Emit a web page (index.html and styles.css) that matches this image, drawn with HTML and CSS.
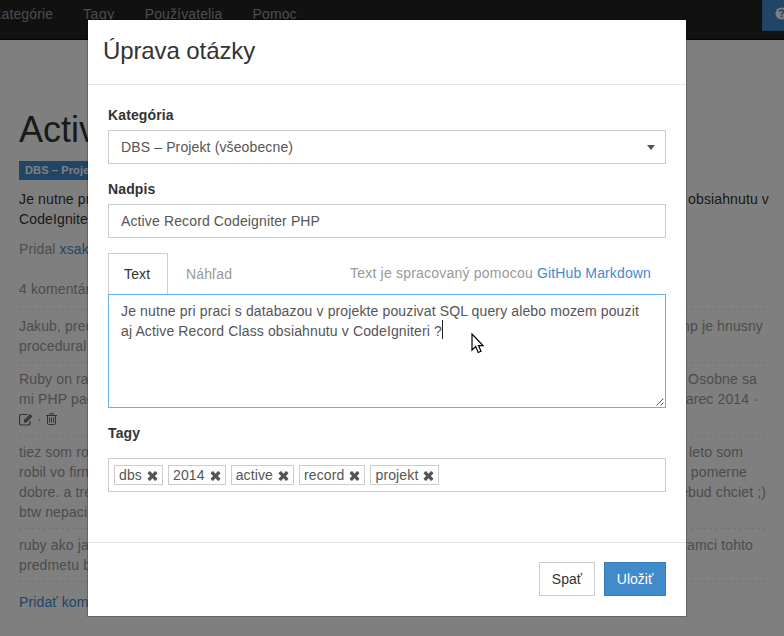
FILE: index.html
```html
<!DOCTYPE html>
<html lang="sk">
<head>
<meta charset="utf-8">
<title>Úprava otázky</title>
<link rel="stylesheet" href="styles.css">
</head>
<body>
<svg class="defs" width="0" height="0"><symbol id="times" viewBox="0 0 11 11"><path d="M3 .4 5.500 2.900 8 .4Q8.500 0 9 .4L10.600 2Q11 2.500 10.600 3L8.100 5.500 10.600 8Q11 8.500 10.600 9L9 10.600Q8.500 11 8 10.600L5.500 8.100 3 10.600Q2.500 11 2 10.600L.4 9Q0 8.500.4 8L2.900 5.500.4 3Q0 2.500.4 2L2 .4Q2.500 0 3 .4Z"/></symbol></svg>
<nav class="navbar">
  <div class="nav-links"><a>Kategórie</a><a>Tagy</a><a>Používatelia</a><a>Pomoc</a></div>
  <button class="help"><svg width="13" height="13" viewBox="0 0 13 13"><circle cx="6.500" cy="6.500" r="6" fill="#fff"/><path d="M4.300 5Q4.500 3 6.600 3 8.700 3.100 8.700 4.800C8.700 6.100 6.600 6.100 6.600 7.700" fill="none" stroke="#428bca" stroke-width="1.700"/><path d="M5.700 8.600h1.800v1.700H5.700z" fill="#428bca"/></svg></button>
</nav>
<main class="page">
  <h1>Activ</h1>
  <div class="label-row"><span class="label">DBS – Proje</span></div>
  <div class="question">
    <div class="line"><span>Je nutne pr</span><span class="end-0">obsiahnutu v</span></div>
    <div class="line"><span>CodeIgnite</span></div>
  </div>
  <div class="author">Pridal <a>xsak</a></div>
  <div class="count">4 komentár</div>
  <div class="comment">
    <div class="line"><span>Jakub, pred</span><span class="end-6">np je hnusny</span></div>
    <div class="line"><span>procedural</span></div>
  </div>
  <div class="comment">
    <div class="line"><span>Ruby on ra</span><span class="end-12">Osobne sa</span></div>
    <div class="line"><span>mi PHP pac</span><span class="end-11">arec 2014 ·</span></div>
    <div class="actions">
      <svg width="14" height="13" viewBox="0 0 14 13" fill="none" stroke="#666"><path d="M8.500 1.500H2.500Q.5 1.500.5 3.500V10Q.5 12 2.500 12H9Q11 12 11 10V8" stroke-width="1.200"/><path d="M5 9.500V7L11 1l2.400 2.400-6 6.100Z" fill="#666" stroke="none"/><path d="m6.500 7.500 4.500-4.500" stroke="#ddd" stroke-width=".6"/></svg>
      <span>·</span>
      <svg width="11" height="12" viewBox="0 0 11 12" fill="none" stroke="#666"><path d="M0 2.500h11M3.500 2.500 4 .6h3l.5 1.900M1.500 2.500v7.700q0 1.300 1.200 1.300h5.600q1.200 0 1.200-1.300V2.500M3.500 4.500v5M5.500 4.500v5M7.500 4.500v5"/></svg>
    </div>
  </div>
  <div class="comment">
    <div class="line"><span>tiez som ro</span><span class="end-26">leto som</span></div>
    <div class="line"><span>robil vo firm</span><span class="end-22">pomerne</span></div>
    <div class="line"><span>dobre. a tre</span><span class="end-3">ebud chciet ;)</span></div>
    <div class="line"><span>btw nepaci</span></div>
  </div>
  <div class="comment last">
    <div class="line"><span>ruby ako ja</span><span class="end-16">ramci tohto</span></div>
    <div class="line"><span>predmetu b</span></div>
  </div>
  <a class="add">Pridať kom</a>
</main>
<div class="backdrop">
  <section class="modal">
    <header class="modal-header"><h2>Úprava otázky</h2></header>
    <div class="modal-body">
      <label>Kategória</label>
      <div class="control select"><span>DBS – Projekt (všeobecne)</span><i class="caret"></i></div>
      <label>Nadpis</label>
      <div class="control">Active Record Codeigniter PHP</div>
      <div class="tabs"><span class="tab active">Text</span><span class="tab">Náhľad</span><span class="hint">Text je spracovaný pomocou <a>GitHub Markdown</a></span></div>
      <div class="editor">Je nutne pri praci s databazou v projekte pouzivat SQL query alebo mozem pouzit<br>aj Active Record Class obsiahnutu v CodeIgniteri ?<i class="text-caret"></i>
        <svg class="grip" width="8" height="8" viewBox="0 0 8 8"><path d="M.5 7.500l7-7M4.500 7.500l3-3" stroke="#555" fill="none"/></svg>
      </div>
      <label class="tags-label">Tagy</label>
      <div class="control tags">
        <span class="tag">dbs<svg><use href="#times"/></svg></span>
        <span class="tag">2014<svg><use href="#times"/></svg></span>
        <span class="tag">active<svg><use href="#times"/></svg></span>
        <span class="tag">record<svg><use href="#times"/></svg></span>
        <span class="tag">projekt<svg><use href="#times"/></svg></span>
      </div>
    </div>
    <footer class="modal-footer"><button class="btn">Spať</button><button class="btn primary">Uložiť</button></footer>
  </section>
</div>
<svg class="pointer" width="13" height="21" viewBox="0 0 13 21"><path d="M1 1v16l3.700-3.500 2.500 6 2.800-1.200-2.500-5.700h4.500Z" fill="#fff" stroke="#000" stroke-width="1.200"/></svg>
</body>
</html>
```

FILE: styles.css
```css
* { box-sizing: border-box; }
body {
  margin: 0;
  height: 636px;
  overflow: hidden;
  background: #fff;
  color: #333;
  font: 14px/20px "Liberation Sans", Arial, sans-serif;
  letter-spacing: .13px;
}
a { color: #428bca; }
h1, h2 { margin: 0; font-weight: 400; letter-spacing: 0; }
svg { flex: none; }
.defs { position: absolute; }

.navbar {
  display: flex;
  justify-content: space-between;
  align-items: flex-start;
  height: 40px;
  background: #222;
  border-bottom: 1px solid #080808;
}
.nav-links { display: flex; gap: 30px; margin-left: -8px; padding-top: 4px; }
.nav-links a { color: #999; }
.nav-links a:nth-child(2) { letter-spacing: .5px; }
.help {
  width: 22px;
  height: 31px;
  padding: 0 0 3px 12px;
  overflow: hidden;
  border: 1px solid #357ebd;
  border-width: 0 0 1px 1px;
  background: #428bca;
}
.help svg { display: block; }

.page { padding: 70px 15px 0 19px; }
h1 { font-size: 36px; line-height: 40px; }
.label-row { display: flex; margin-top: 11px; }
.label {
  width: 100px;
  padding: 0 6px;
  height: 19px;
  background: #428bca;
  color: #fff;
  font-size: 11px;
  font-weight: 700;
  line-height: 18px;
}
.question { margin-top: 9px; }
.line { display: flex; justify-content: space-between; height: 20px; white-space: nowrap; }
.author { margin-top: 10px; color: #999; }
.count { margin: 20px 0 10px; color: #999; }
.comment {
  padding: 7px 0 6px;
  color: #999;
  background: repeating-linear-gradient(90deg, #e6e6e6 0 3px, transparent 3px 6px) top / 100% 1px no-repeat;
}
.comment.last {
  background:
    repeating-linear-gradient(90deg, #e6e6e6 0 3px, transparent 3px 6px) top / 100% 1px no-repeat,
    repeating-linear-gradient(90deg, #e6e6e6 0 3px, transparent 3px 6px) bottom / 100% 1px no-repeat;
  padding-bottom: 7px;
}
.end-3 { margin-right: 3px; }
.end-6 { margin-right: 6px; }
.end-11 { margin-right: 11px; }
.end-12 { margin-right: 12px; }
.end-16 { margin-right: 16px; }
.end-22 { margin-right: 22px; }
.end-26 { margin-right: 26px; }
.actions { display: flex; align-items: center; gap: 4px; height: 20px; }
.add { display: block; margin-top: 10px; }

.backdrop {
  position: absolute;
  inset: 0;
  padding: 19px 97px 19px 87px;
  background: rgba(0, 0, 0, .5);
}
.modal {
  width: 600px;
  height: 598px;
  border: 1px solid rgba(0, 0, 0, .2);
  background: #fff;
  background-clip: padding-box;
}
.modal-header { height: 65px; padding: 15px; border-bottom: 1px solid #e5e5e5; }
h2 { font-size: 24px; line-height: 32px; letter-spacing: -.1px; }
.modal-body { height: 457px; padding: 20px; }
label { display: block; margin-bottom: 5px; font-weight: 700; }
.control {
  height: 34px;
  margin-bottom: 15px;
  padding: 6px 12px;
  border: 1px solid #ccc;
  color: #555;
}
.select { display: flex; align-items: center; justify-content: space-between; padding-right: 10px; }
.caret { border: 4.5px solid transparent; border-top: 5px solid #555; border-bottom: 0; }
.tabs { display: flex; height: 41px; }
.tab { padding: 11px 18px; color: #999; line-height: 20px; }
.tab.active {
  width: 60px;
  padding: 10px 15px;
  border: 1px solid #ccc;
  border-bottom: 0;
  color: #333;
}
.hint { margin-left: auto; padding: 10px 15px; color: #999; letter-spacing: .21px; }
.hint a { letter-spacing: .13px; }
.editor {
  position: relative;
  height: 114px;
  padding: 6px 12px;
  border: 1px solid #66afe9;
  color: #555;
  white-space: nowrap;
}
.text-caret { display: inline-block; width: 1px; height: 19px; margin-top: -2px; background: #222; vertical-align: -3px; }
.grip { position: absolute; right: 1px; bottom: 1px; }
.tags-label { margin: 15px 0; }
.tags { display: flex; align-items: center; gap: 5px; padding: 0 5px; }
.tag {
  display: flex;
  align-items: center;
  gap: 5px;
  height: 20px;
  padding: 0 4px;
  border: 1px solid #ccc;
}
.tag svg { width: 11px; height: 10px; fill: #555; margin-top: 1px; }

.modal-footer {
  display: flex;
  justify-content: flex-end;
  gap: 9px;
  padding: 19px 20px;
  border-top: 1px solid #e5e5e5;
}
.btn {
  height: 34px;
  padding: 0 12px;
  border: 1px solid #ccc;
  background: #fff;
  color: #333;
  font: inherit;
}
.primary { width: 62px; padding: 0; border-color: #357ebd; background: #428bca; color: #fff; }
.pointer { position: absolute; left: 471px; top: 333px; }
```
